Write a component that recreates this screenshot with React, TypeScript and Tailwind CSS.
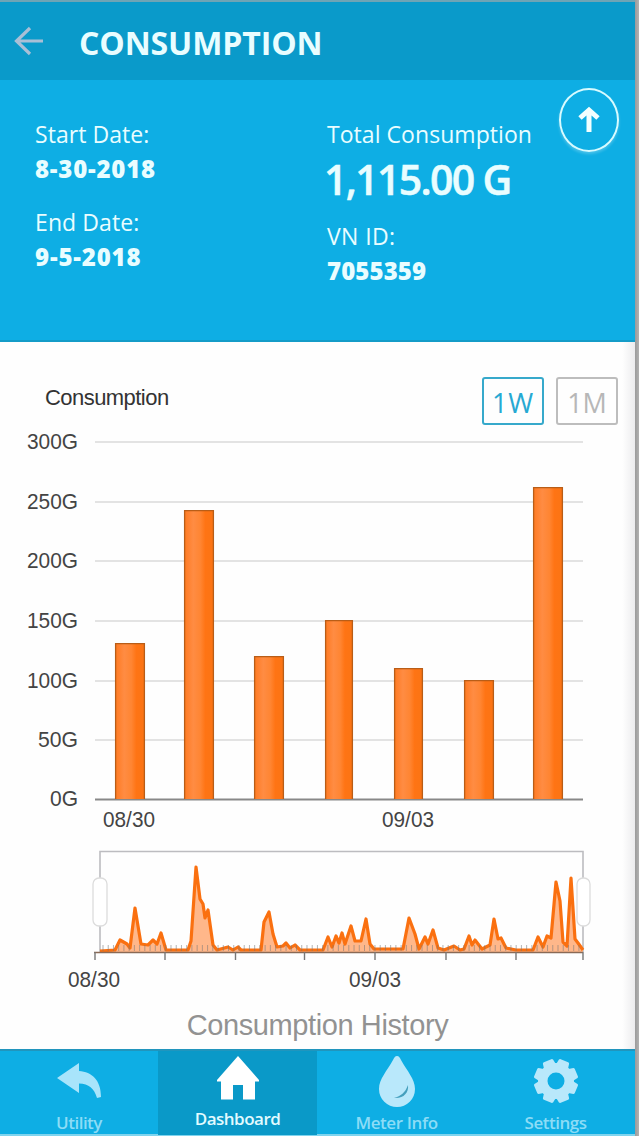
import React from "react";

const GRID = [
  { label: "300G", y: 442 },
  { label: "250G", y: 502 },
  { label: "200G", y: 561 },
  { label: "150G", y: 621 },
  { label: "100G", y: 681 },
  { label: "50G", y: 740 },
  { label: "0G", y: 799.5 },
];

const BARS = [
  { x: 115, w: 30, y: 643 },
  { x: 184, w: 30, y: 510 },
  { x: 254, w: 30, y: 656 },
  { x: 325, w: 28, y: 620 },
  { x: 394, w: 29, y: 668 },
  { x: 464, w: 30, y: 680 },
  { x: 533, w: 30, y: 487 },
];

const HISTORY =
  "100,951 115,950 120,940 127,944 130,948 135,908 141,944 148,945 153,940 157,944 161,933 166,950 188,950 191,941 196,867 200,899 203,904 205,918 208,910 213,945 217,950 228,947 233,950 238,947 241,950 261,950 264,922 269,912 273,934 277,947 283,946 286,943 290,948 295,945 300,950 323,950 328,937 332,947 336,936 339,943 342,933 345,944 351,926 355,941 361,941 366,919 370,944 374,949 403,949 409,918 415,934 419,949 425,937 428,944 433,930 438,948 444,950 454,946 460,950 464,949 469,936 472,945 475,940 482,949 490,945 494,919 498,939 501,938 506,948 516,950 533,950 538,937 543,947 547,936 551,938 556,882 560,901 563,942 567,946 571,878 575,939 578,943 583,950";

const TICKS = [95, 165, 235.5, 304.5, 375, 446, 516, 583];
const MINOR = Array.from({ length: 92 }, (_, i) => 103 + i * 5.23);

function Header() {
  return (
    <header className="flex h-20 items-center border-t-2 border-[#6fa4b5] bg-[#0a9aca] pl-[13px]">
      <svg width="31" height="30" viewBox="0 0 31 30" fill="none" stroke="#a9bfd6" strokeWidth="3.2" className="-mt-px">
        <path d="M30 15H4M17 2L3.5 15L17 28" />
      </svg>
      <h1 className="ml-[35px] mt-1 text-[32px] leading-[42px] font-bold tracking-[-0.1px] whitespace-nowrap">CONSUMPTION</h1>
    </header>
  );
}

function Summary() {
  return (
    <section className="flex h-[262px] border-b-2 border-[#149cc8] pl-[35px]">
      <div className="w-[292px] pt-9 whitespace-nowrap">
        <p className="h-[34px] text-[23px] leading-9 tracking-[0.05px]">Start Date:</p>
        <p className="h-[54px] text-[24px] leading-[37px] font-extrabold tracking-[0.8px]">8-30-2018</p>
        <p className="h-[34px] text-[23px] leading-9 tracking-[0.1px]">End Date:</p>
        <p className="text-[24px] leading-[37px] font-extrabold tracking-[0.85px]">9-5-2018</p>
      </div>
      <div className="w-[232px] pt-9 whitespace-nowrap">
        <p className="h-[34px] text-[23px] leading-9 tracking-[0.05px]">Total Consumption</p>
        <p className="-ml-[3px] h-[68px] text-[41px] leading-[58px] font-semibold tracking-[-1.7px] [-webkit-text-stroke:0.5px_#e9fdff]">1,115.00 G</p>
        <p className="h-[34px] text-[23px] leading-9 tracking-[0.4px]">VN ID:</p>
        <p className="text-[24px] leading-[38px] font-extrabold tracking-[0.1px]">7055359</p>
      </div>
      <button aria-label="Up" className="mt-2 flex h-16 w-[60px] items-center justify-center rounded-[50%] border-2 border-[#d7fbff] shadow-[0_2px_3px_rgba(255,255,255,0.25)]">
        <svg width="22" height="27" viewBox="0 0 22 27" fill="none" stroke="#f2ffff" strokeWidth="5" className="-mt-0.5">
          <path d="M11 26V4M2 12L11 4L20 12" />
        </svg>
      </button>
    </section>
  );
}

function Charts() {
  return (
    <svg width="634" height="576" viewBox="0 426 634 576" className="block" fontFamily="Liberation Sans, Arial, sans-serif" fontSize="22" fill="#444">
      <defs>
        <linearGradient id="bar">
          <stop offset="0" stopColor="#ff7a22" />
          <stop offset="0.3" stopColor="#ff8c43" />
          <stop offset="0.55" stopColor="#ff8532" />
          <stop offset="0.72" stopColor="#ff7414" />
          <stop offset="1" stopColor="#fb7414" />
        </linearGradient>
      </defs>
      {GRID.map((g, i) => (
        <g key={g.label}>
          <path d={`M95 ${i === 6 ? 799.5 : g.y}H583`} stroke={i === 6 ? "#888" : "#dadada"} strokeWidth={i === 6 ? 1.8 : 1.4} />
          <text x="78" y={g.y + 6.5} textAnchor="end" textLength={i < 5 ? 51 : i === 5 ? 40 : 28} lengthAdjust="spacingAndGlyphs">{g.label}</text>
        </g>
      ))}
      {BARS.map((b) => (
        <path key={b.x} d={`M${b.x + 0.6} 799V${b.y + 0.6}h${b.w - 1.2}V799`} fill="url(#bar)" stroke="#b95d17" strokeWidth="1.3" />
      ))}
      <text x="103" y="827" textLength="52" lengthAdjust="spacingAndGlyphs">08/30</text>
      <text x="382" y="827" textLength="52" lengthAdjust="spacingAndGlyphs">09/03</text>

      <path d="M100 952V851.5H583V952" fill="none" stroke="#bcbcc0" strokeWidth="1.6" />
      <polygon points={`100,952 ${HISTORY} 583,952`} fill="#ffb78a" />
      <polyline points={HISTORY} fill="none" stroke="#fa7010" strokeWidth="3.2" strokeLinejoin="round" />
      {MINOR.map((x) => (
        <path key={x} d={`M${x} 945V951`} stroke="#777" strokeOpacity="0.55" strokeWidth="1" />
      ))}
      <path d="M94 952.5H583" stroke="#8a6a55" strokeWidth="1.4" />
      {TICKS.map((x) => (
        <path key={x} d={`M${x} 952V960`} stroke="#777" strokeWidth="1.4" />
      ))}
      <rect x="93" y="878" width="14" height="48" rx="6" fill="#fff" stroke="#dcdcdc" strokeWidth="1.3" />
      <rect x="577" y="878" width="13" height="48" rx="6" fill="#fff" stroke="#dcdcdc" strokeWidth="1.3" />
      <text x="68" y="987" textLength="52" lengthAdjust="spacingAndGlyphs">08/30</text>
      <text x="349" y="987" textLength="52" lengthAdjust="spacingAndGlyphs">09/03</text>
    </svg>
  );
}

function Nav() {
  return (
    <nav className="grid h-[87px] grid-cols-[158px_159px_159px_159px] border-t-2 border-b-2 border-t-[#2195bd] border-b-[#7fd4ee] bg-[#0eaee4] text-[17px] leading-6 font-semibold whitespace-nowrap text-[#8cdcf6]">
      <a className="flex flex-col items-center">
        <svg width="46" height="36" viewBox="0 0 46 36" className="mt-3" fill="#a8e4fb">
          <path d="M1 15L23 0V8C36 9 45 17 45 34L41 35C38 25 33 21 23 20.500V30Z" />
        </svg>
        <span className="mt-[12px] tracking-[-0.5px]">Utility</span>
      </a>
      <a className="flex flex-col items-center bg-[#0a99c8] text-[#e3fbff]">
        <svg width="44" height="44" viewBox="0 0 44 44" className="mt-[5px]" fill="#fff">
          <path d="M22 0L43 24V25.500H39V43.500H27V29H17V43.500H5V25.500H1V24Z" />
        </svg>
        <span className="mt-[7px] tracking-[-0.5px]">Dashboard</span>
      </a>
      <a className="flex flex-col items-center">
        <svg width="38" height="51" viewBox="0 0 38 51" className="mt-[5px]">
          <path d="M19 0C21 0 22 2 23 4C29 15 37 23 37 33A18 18 0 0 1 1 33C1 23 9 15 15 4C16 2 17 0 19 0Z" fill="#b9e8fb" />
          <path d="M30 29C31 37 25 43 16 42C23 40 27 37 30 29Z" fill="#459fbd" />
        </svg>
        <span className="mt-[4px] tracking-[-0.4px]">Meter Info</span>
      </a>
      <a className="flex flex-col items-center">
        <svg width="44" height="44" viewBox="-22 -22 44 44" className="mt-2" fill="#b9e8fb">
          <path fillRule="evenodd" d="M-18 0A18 18 0 1 1 18 0A18 18 0 1 1 -18 0M-8.500 0A8.500 8.500 0 1 0 8.500 0A8.500 8.500 0 1 0 -8.500 0" />
          {[22.5, 67.5, 112.5, 157.5, 202.5, 247.5, 292.5, 337.5].map((a) => (
            <path key={a} transform={`rotate(${a})`} d="M-6.500 -15L-5.500 -21Q-5 -22 -4 -22H4Q5 -22 5.500 -21L6.500 -15Z" />
          ))}
        </svg>
        <span className="mt-[8px] tracking-[-0.5px]">Settings</span>
      </a>
    </nav>
  );
}

export default function App() {
  return (
    <div className="flex h-[1136px] w-[639px] overflow-hidden bg-[#aaa] font-['Open_Sans','Noto_Sans',sans-serif] text-[#e9fdff]">
      <main className="flex w-[635px] flex-col bg-[#0eaee4]">
        <Header />
        <Summary />
        <section className="flex h-[707px] flex-col bg-gradient-to-r from-[#fefefe] from-98% to-[#ececee] font-['Liberation_Sans',Arial,sans-serif]">
          <div className="flex h-[84px] items-start pt-[35px] pl-[45px]">
            <h2 className="mt-2 w-[437px] text-[22px] leading-[26px] tracking-[-0.55px] text-[#333]">Consumption</h2>
            <button className="h-12 w-[62px] rounded-[3px] border-2 border-[#36a9cb] pt-1 font-['Open_Sans',sans-serif] text-[27px] leading-10 tracking-[0.8px] text-[#27a9d3]">1W</button>
            <button className="ml-3 h-12 w-[62px] rounded-[3px] border-2 border-[#bdbdbd] pt-1 font-['Open_Sans',sans-serif] text-[27px] leading-10 text-[#b7b7b7]">1M</button>
          </div>
          <Charts />
          <p className="mt-[5px] text-center text-[29px] leading-[36px] tracking-[-0.4px] whitespace-nowrap text-[#929292]">Consumption History</p>
        </section>
        <Nav />
      </main>
      <div className="w-[4px] bg-gradient-to-r from-[#9b9b9b] to-[#b2b2b2]" />
    </div>
  );
}
